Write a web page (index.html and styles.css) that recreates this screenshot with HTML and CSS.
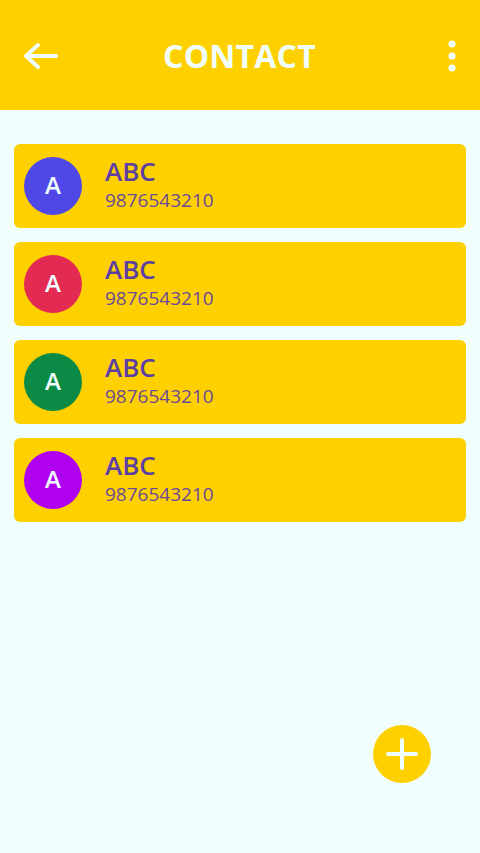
FILE: index.html
```html
<!DOCTYPE html>
<html>
<head>
<meta charset="utf-8">
<link rel="stylesheet" href="styles.css">
</head>
<body>
<div class="app">
  <header class="topbar">
    <svg class="icon back" width="36" height="30" viewBox="0 0 36 30">
      <path d="M34 15H5M16 4L4 15l12 11" fill="none" stroke="#F0FFFE" stroke-width="4" stroke-linecap="round" stroke-linejoin="round"/>
    </svg>
    <h1 class="title">CONTACT</h1>
    <svg class="icon more" width="10" height="32" viewBox="0 0 10 32">
      <circle cx="5" cy="4" r="3.6" fill="#F0FFFE"/>
      <circle cx="5" cy="16" r="3.6" fill="#F0FFFE"/>
      <circle cx="5" cy="28" r="3.6" fill="#F0FFFE"/>
    </svg>
  </header>
  <main class="list">
    <div class="card">
      <div class="avatar blue">A</div>
      <div class="info"><div class="name">ABC</div><div class="phone">9876543210</div></div>
    </div>
    <div class="card">
      <div class="avatar red">A</div>
      <div class="info"><div class="name">ABC</div><div class="phone">9876543210</div></div>
    </div>
    <div class="card">
      <div class="avatar green">A</div>
      <div class="info"><div class="name">ABC</div><div class="phone">9876543210</div></div>
    </div>
    <div class="card">
      <div class="avatar purple">A</div>
      <div class="info"><div class="name">ABC</div><div class="phone">9876543210</div></div>
    </div>
  </main>
  <button class="fab" aria-label="add">
    <svg width="34" height="34" viewBox="0 0 34 34">
      <path d="M17 3v28M3 17h28" stroke="#F0FFFE" stroke-width="4" stroke-linecap="round"/>
    </svg>
  </button>
</div>
</body>
</html>
```
FILE: styles.css
```css
* { box-sizing: border-box; }
html, body { margin: 0; padding: 0; }
body {
  width: 480px;
  height: 853px;
  background: #F0FFFE;
  font-family: "Open Sans", "Noto Sans", sans-serif;
  overflow: hidden;
}
.app { position: relative; width: 480px; height: 853px; }
.topbar {
  height: 110px;
  background: #FFD000;
  display: grid;
  grid-template-columns: 1fr auto 1fr;
  align-items: center;
  padding: 0 23px 0 22px;
}
.icon { display: block; }
.back { margin-top: 2px; justify-self: start; }
.more { margin-top: 2px; justify-self: end; }
.title {
  margin: 0;
  color: #F0FFFE;
  font-size: 32px;
  font-weight: 700;
  letter-spacing: 0.2px;
  line-height: 1;
  margin-top: 2px;
}
.list {
  padding: 34px 14px 0 14px;
  display: flex;
  flex-direction: column;
  gap: 14px;
}
.card {
  height: 84px;
  background: #FFD000;
  border-radius: 6px;
  display: flex;
  align-items: center;
  padding-left: 10px;
}
.avatar {
  width: 58px;
  height: 58px;
  border-radius: 50%;
  display: flex;
  align-items: center;
  justify-content: center;
  color: #F0FFFE;
  font-size: 24px;
  font-weight: 600;
  padding-bottom: 3px;
}
.blue { background: #4F48E6; }
.red { background: #E32A52; }
.green { background: #0B8A45; }
.purple { background: #B000F2; }
.info { margin-left: 23px; display: flex; flex-direction: column; margin-top: -3px; }
.name {
  color: #5B3FA3;
  font-size: 26px;
  font-weight: 600;
  line-height: 28px;
}
.phone {
  color: #6A4A98;
  font-size: 19px;
  line-height: 24px;
  margin-top: 3px;
}
.fab {
  position: absolute;
  left: 373px;
  top: 725px;
  width: 58px;
  height: 58px;
  border-radius: 50%;
  border: none;
  background: #FFD000;
  display: flex;
  align-items: center;
  justify-content: center;
  padding: 0;
}
```
